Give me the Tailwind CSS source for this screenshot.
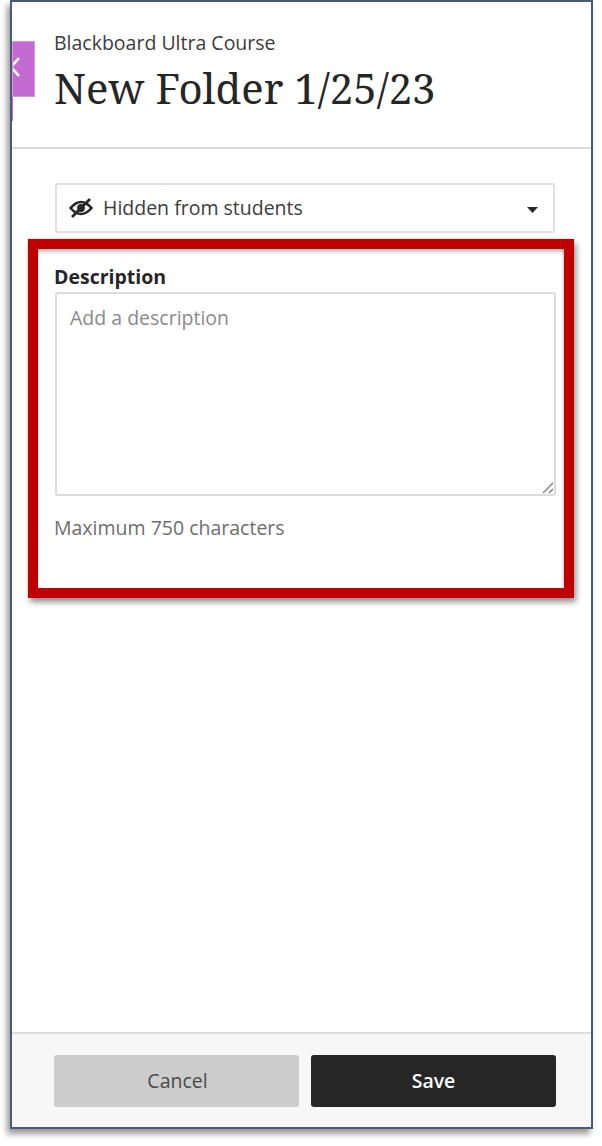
<!DOCTYPE html>
<html>
<head>
<meta charset="utf-8">
<script src="https://cdn.jsdelivr.net/npm/@tailwindcss/browser@4"></script>
</head>
<body class="bg-white m-0 w-[602px] h-[1146px] overflow-hidden font-['Open_Sans',sans-serif]">
<div class="relative pl-[10px] pr-[9px] pb-[17px] h-[1146px]">
  <div class="relative flex flex-col h-[1129px] w-[583px] border-2 border-[#4a5a75] bg-white shadow-[-3px_5px_6px_rgba(0,0,0,0.4)]">
    <div class="absolute left-0 top-[39px] w-[23px] h-[56px] bg-[#c36bd3] border border-[#d596e0] overflow-hidden">
      <svg width="8" height="22" viewBox="0 0 8 22" class="absolute left-0 top-[14px]"><path d="M6 2-2 11l8 9" fill="none" stroke="#fff" stroke-width="2.6"/></svg>
    </div>
    <div class="absolute left-0 top-[95px] w-px h-[24px] bg-[#c36bd3]"></div>
    <header class="h-[147px] shrink-0 border-b-2 border-[#dcdcdc] pl-[42px] pt-[28px]">
      <p class="text-[19.5px] leading-[26px] text-[#3c3c3c]">Blackboard Ultra Course</p>
      <h1 class="mt-[7px] text-[41.9px] leading-[50px] text-[#262626] font-['Noto_Serif','DejaVu_Serif',serif] whitespace-nowrap">New Folder 1/25/23</h1>
    </header>
    <main class="flex-1 pl-[43px] pr-[36px] pt-[34px]">
      <div class="h-[50px] w-[500px] border-2 border-[#e0e0e0] rounded-[2px] flex items-center pl-[12px] pr-[15px]">
        <svg width="24" height="20" viewBox="0 0 24 20" fill="none" stroke="#262626" stroke-width="2.6">
          <path d="M1.500 10C5 6 8.500 4 12 4s7 2 10.500 6C19 14 15.500 16 12 16S5 14 1.500 10Z"/>
          <circle cx="12" cy="10" r="2.600"/>
          <path d="M3 19 21 1"/>
        </svg>
        <span class="ml-[10px] text-[19.5px] text-[#3c3c3c]">Hidden from students</span>
        <svg width="11" height="6" viewBox="0 0 11 6" class="ml-auto mt-[4px]"><path d="M0 0h11L5.500 6Z" fill="#262626"/></svg>
      </div>
      <label class="block mt-[31px] -ml-px text-[19.5px] leading-[25px] font-bold text-[#262626]">Description</label>
      <div class="relative mt-[3px] w-[501px] h-[204px] border-2 border-[#dcdcdc] rounded-[3px] pl-[13px] pt-[11px]">
        <span class="text-[19.5px] leading-[26px] text-[#8a8a8a]">Add a description</span>
        <svg width="12" height="12" viewBox="0 0 12 12" class="absolute right-[0px] bottom-[0px]"><path d="M1 11 11 1M7 11l4-4" stroke="#777" stroke-width="1.2"/></svg>
      </div>
      <p class="mt-[19px] -ml-px text-[19.5px] leading-[25px] text-[#6e6e6e]">Maximum 750 characters</p>
    </main>
    <footer class="h-[95px] shrink-0 border-t-2 border-[#dcdcdc] bg-[#f7f7f7] pl-[42px] pt-[21px] flex gap-[12px]">
      <button class="w-[245px] h-[52px] pl-[2px] rounded-[3px] bg-[#cccccc] text-[19.5px] text-[#4a4a4a]">Cancel</button>
      <button class="w-[245px] h-[52px] rounded-[3px] bg-[#262626] text-[19.5px] font-semibold text-white">Save</button>
    </footer>
  </div>
  <div class="absolute left-[28px] top-[239px] w-[546px] h-[359px] border-[10px] border-[#c00000] shadow-[2px_4px_6px_rgba(0,0,0,0.45),inset_0_4px_5px_-2px_rgba(0,0,0,0.35),inset_-2px_0_3px_-2px_rgba(0,0,0,0.3)]"></div>
</div>
</body>
</html>
